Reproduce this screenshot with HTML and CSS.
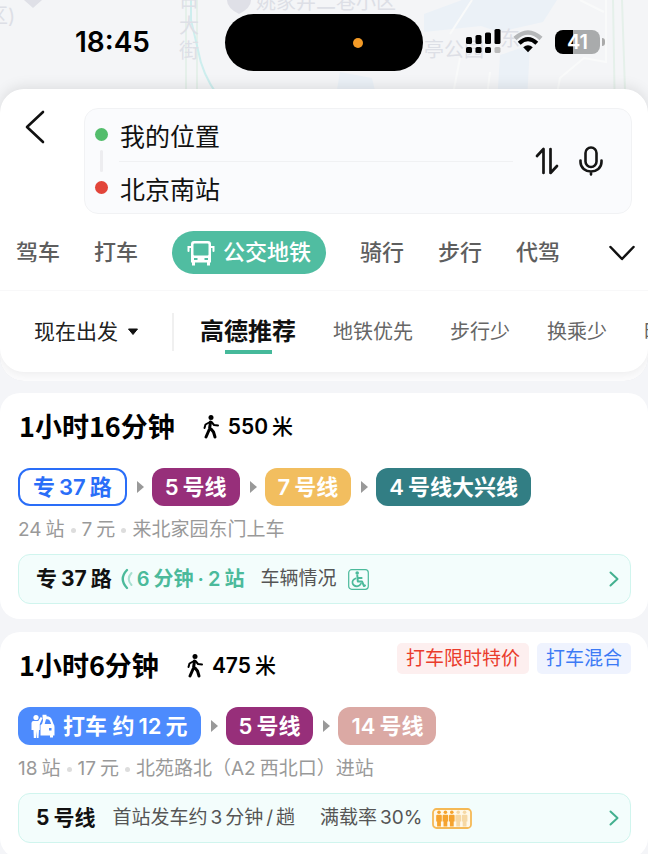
FILE: index.html
```html
<!DOCTYPE html>
<html lang="zh-CN">
	<head>
		<meta charset="utf-8">
		<meta name="viewport" content="width=device-width, initial-scale=1">
		<title>公交地铁路线</title>
		<link rel="stylesheet" href="styles.css">
	</head>
	<body>
		<header class="status-bar">
			<svg class="map" viewBox="0 0 648 120" preserveAspectRatio="xMidYMin slice" aria-hidden="true">
				<rect width="648" height="120" fill="#f4f5f7"/>
				<path d="M462 0h95l-14 22-44 10-18-6-57 6V14zM500 55l30-10-4 75h-30zM340 72l32 6 10 42h-50z" fill="#ebf1f7"/>
				<path d="M472 0l-22 34M460 58l-12 62M490 72l-6 48M606 0v62l-22-4-24 20-8 42M580 0l24 12" fill="none" stroke="#f9fafa" stroke-width="2"/>
				<path d="M186 0v120M197 0v120M613 0l2 120M622 0l4 120" fill="none" stroke="#e5f0ea" stroke-width="2"/>
				<path d="M191 0v20l7 30q4 24 20 46" fill="none" stroke="#cdeeee" stroke-width="2"/>
				<path d="M24 0h18l-9 8z" fill="#dfe0e7"/>
				<path d="M227 0h24q0 8-12 14-12-6-12-14z" fill="#dfe0e7"/>
				<g class="map-label">
					<text x="-12" y="23">区)</text>
					<text x="179" y="7">白</text>
					<text x="179" y="33">大</text>
					<text x="179" y="58">街</text>
					<text x="256" y="9">姚家井二巷小区</text>
					<text x="424" y="57">亭公园</text>
					<text x="500" y="46">东</text>
				</g>
			</svg>
			<time class="clock">18:45</time>
			<div class="island"><span class="island-dot"></span></div>
			<div class="status-icons">
				<svg width="35" height="25" viewBox="0 0 35 25" aria-hidden="true">
					<g fill="#000">
						<rect x="0" y="8" width="6" height="7" rx="1.6"/>
						<rect x="9.5" y="6" width="6" height="9" rx="1.6"/>
						<rect x="19" y="3.5" width="6" height="11.5" rx="1.6"/>
						<rect x="28.5" y="0" width="6" height="15" rx="1.6"/>
						<rect x="0" y="18" width="6" height="6" rx="1.6"/>
						<rect x="9.5" y="18" width="6" height="6" rx="1.6"/>
						<rect x="19" y="18" width="6" height="6" rx="1.6"/>
					</g>
					<rect x="28.5" y="18" width="6" height="6" rx="1.6" fill="#bbb"/>
				</svg>
				<svg width="30" height="23" viewBox="0 0 30 23" aria-hidden="true">
					<path d="M2 8.5Q15-3.5 28 8.5" fill="none" stroke="#b5b7b9" stroke-width="4.5"/>
					<path d="M6.200 13.200Q15 5 23.800 13.200" fill="none" stroke="#000" stroke-width="4.200"/>
					<path d="M10.200 17.300Q15 13 19.800 17.300L15 22.300z" fill="#000"/>
				</svg>
				<div class="battery"><span class="battery-level">41</span></div>
			</div>
		</header>

		<div class="panel-wrap">
			<section class="panel">
				<form class="search">
					<button class="icon-btn back" type="button" aria-label="返回">
						<svg width="20" height="34" viewBox="0 0 20 34"><path d="M18 2L2 17l16 15" fill="none" stroke="#111" stroke-width="2.6" stroke-linecap="round" stroke-linejoin="round"/></svg>
					</button>
					<div class="places">
						<div class="place-fields">
							<div class="place">
								<label class="dot dot-start" for="from" aria-label="起点"></label>
								<input id="from" type="text" value="我的位置">
							</div>
							<div class="place-line"><span class="link-line"></span><span class="split-line"></span></div>
							<div class="place">
								<label class="dot dot-end" for="to" aria-label="终点"></label>
								<input id="to" type="text" value="北京南站">
							</div>
						</div>
						<button class="icon-btn" type="button" aria-label="交换起终点">
							<svg width="24" height="28" viewBox="0 0 24 28"><path d="M2 9l6.500-7V26M15.500 2v24l6.500-7" fill="none" stroke="#151515" stroke-width="2.7" stroke-linecap="round" stroke-linejoin="round"/></svg>
						</button>
						<button class="icon-btn" type="button" aria-label="语音输入">
							<svg width="24" height="30" viewBox="0 0 24 30"><g fill="none" stroke="#151515" stroke-width="2.6" stroke-linecap="round"><rect x="6.5" y="1.5" width="11" height="19.5" rx="5.5"/><path d="M1.500 14.500v1.500c0 6 5 9.500 10.500 9.500S22.500 22 22.500 16v-1.500M12 25.500v3"/></g></svg>
						</button>
					</div>
				</form>

				<nav class="modes">
					<a href="#">驾车</a>
					<a href="#">打车</a>
					<a href="#" class="mode-on">
						<svg width="28" height="26" viewBox="0 0 28 26" aria-hidden="true">
							<path fill="#fff" fill-rule="evenodd" d="M7 1h14q3 0 3 3v18.500H4V4q0-3 3-3zm.500 2.600q-1 0-1 1v10q0 1 1 1h13q1 0 1-1v-10q0-1-1-1zM7 18v2h3.500v-2zm10.500 0v2H21v-2z"/>
							<path fill="#fff" d="M5 22h3v3.500H5zM20 22h3v3.500h-3z"/>
							<path d="M4 7H1.500v4M24 7h2.500v4" fill="none" stroke="#fff" stroke-width="2" stroke-linecap="round"/>
						</svg>
						公交地铁
					</a>
					<a href="#">骑行</a>
					<a href="#">步行</a>
					<a href="#">代驾</a>
					<button class="icon-btn more" type="button" aria-label="更多">
						<svg width="26" height="16" viewBox="0 0 26 16"><path d="M1.500 2L13 14 24.500 2" fill="none" stroke="#111" stroke-width="2.5" stroke-linecap="round" stroke-linejoin="round"/></svg>
					</button>
				</nav>

				<div class="filters">
					<button class="depart" type="button">现在出发
						<svg width="12" height="8" viewBox="0 0 12 8" aria-hidden="true"><path d="M1.500 1h9L6 6.500z" fill="#111" stroke="#111" stroke-linejoin="round"/></svg>
					</button>
					<a href="#" class="filter-on">高德推荐</a>
					<a href="#">地铁优先</a>
					<a href="#">步行少</a>
					<a href="#">换乘少</a>
					<a href="#">时间短</a>
				</div>
			</section>
		</div>

		<main class="routes">
			<article class="route">
				<div class="route-head">
					<h2>1小时16分钟</h2>
					<p class="walk">
						<svg width="16" height="24" viewBox="0 0 16 24" aria-hidden="true"><circle cx="8" cy="2.6" r="2.5"/><path d="M7.500 7L6.500 14 3 22M8 14l2.500 3 1.500 5" class="limb-thick"/><path d="M7 7L2.500 9.500 1.500 13M8.500 7l2.500 3 4 .500" class="limb"/></svg>
						<span><span class="num num-first">550</span>米</span>
					</p>
				</div>
				<div class="legs">
					<span class="leg leg-bus">专<span class="num">37</span>路</span>
					<span class="leg line-5"><span class="num num-first">5</span>号线</span>
					<span class="leg line-7"><span class="num num-first">7</span>号线</span>
					<span class="leg line-4"><span class="num num-first">4</span>号线大兴线</span>
				</div>
				<p class="meta"><span><span class="num num-first">24</span>站</span><span><span class="num num-first">7</span>元</span><span>来北家园东门上车</span></p>
				<a href="#" class="live">
					<strong>专<span class="num">37</span>路</strong>
					<span class="arrive">
						<svg width="12" height="22" viewBox="0 0 12 22" aria-hidden="true"><path d="M6 2Q-2.500 11 6 20" fill="none" stroke="#4bba9b" stroke-width="2.3" stroke-linecap="round"/><path d="M10.500 5Q5 11 10.500 17" fill="none" stroke="#a6dfd0" stroke-width="2" stroke-linecap="round"/></svg>
						<span><span class="num num-first">6</span>分钟<span class="num">·</span><span class="num num-first">2</span>站</span>
					</span>
					<span class="live-text">车辆情况</span>
					<svg width="21" height="21" viewBox="0 0 21 21" aria-hidden="true">
						<g fill="none" stroke="#4bba9b" stroke-linecap="round" stroke-linejoin="round">
							<rect x=".7" y=".7" width="19.6" height="19.6" rx="3" stroke-width="1.2"/>
							<path d="M9.300 6.500l.500 6H14l2 4.500 1-.500M9.600 9h4" stroke-width="2"/>
							<path d="M7.500 9.500Q4 11 4.500 14T9 17.300Q12 17 13 14.500" stroke-width="1.700"/>
						</g>
						<circle cx="9.2" cy="4" r="1.8" fill="#4bba9b"/>
					</svg>
					<svg class="go" width="10" height="16" viewBox="0 0 10 16" aria-hidden="true"><path d="M1.500 1.500L8.500 8l-7 6.500"/></svg>
				</a>
			</article>

			<article class="route">
				<div class="route-head">
					<h2>1小时6分钟</h2>
					<p class="walk">
						<svg width="16" height="24" viewBox="0 0 16 24" aria-hidden="true"><circle cx="8" cy="2.6" r="2.5"/><path d="M7.500 7L6.500 14 3 22M8 14l2.500 3 1.500 5" class="limb-thick"/><path d="M7 7L2.500 9.500 1.500 13M8.500 7l2.500 3 4 .500" class="limb"/></svg>
						<span><span class="num num-first">475</span>米</span>
					</p>
					<div class="tags">
						<span class="tag tag-red">打车限时特价</span>
						<span class="tag tag-blue">打车混合</span>
					</div>
				</div>
				<div class="legs">
					<span class="leg leg-taxi">
						<svg width="24" height="25" viewBox="0 0 24 25" aria-hidden="true">
							<g fill="#fff">
								<circle cx="5" cy="3.5" r="2.6"/>
								<path d="M2.500 7h4.700l2.500-4 1.800 1-2.700 6v6H8l-.500 8H5.800L5.500 17 5 24H2.800L2.500 16H.500V9q0-2 2-2z"/>
								<path fill-rule="evenodd" d="M11.500 2.500V.800h4v1.400q4.500.300 5.500 3.800l1.500 4q1 1 1 3v8.500h-1.500v2h-3v-2h-9.500V11l1.500-1 1-3.500zm3.500 2.700L13.700 10h6.500l-1.200-3q-.700-1.800-2.500-1.800zM18 14v2.500h2.500V14z"/>
							</g>
						</svg>
						<span>打车 约<span class="num">12</span>元</span>
					</span>
					<span class="leg line-5"><span class="num num-first">5</span>号线</span>
					<span class="leg line-14"><span class="num num-first">14</span>号线</span>
				</div>
				<p class="meta"><span><span class="num num-first">18</span>站</span><span><span class="num num-first">17</span>元</span><span>北苑路北（<span class="num num-first">A2</span>西北口）进站</span></p>
				<a href="#" class="live live-wide">
					<strong><span class="num num-first">5</span>号线</strong>
					<span class="live-text">首站发车约<span class="num">3</span>分钟<span class="num">/</span>趟</span>
					<span class="live-text load"><span>满载率<span class="num">30%</span></span>
						<svg width="40" height="21" viewBox="0 0 40 21" aria-hidden="true">
							<defs><g id="person"><circle cx="2.8" cy="1.8" r="1.8"/><path d="M1 4.200h3.600q1 0 1 1V11H4.700v5H.900v-5H0V5.200q0-1 1-1z"/></g></defs>
							<rect x="1" y="1" width="38" height="19" rx="3.5" fill="#fff8e8" stroke="#f5b956" stroke-width="1.8"/>
							<g fill="#f5a32e"><use href="#person" x="4.2" y="2.5"/><use href="#person" x="10.6" y="2.5"/><use href="#person" x="17" y="2.5"/></g>
							<g fill="#f6d8a4"><use href="#person" x="23.4" y="2.5"/><use href="#person" x="29.8" y="2.5"/></g>
						</svg>
					</span>
					<svg class="go" width="10" height="16" viewBox="0 0 10 16" aria-hidden="true"><path d="M1.500 1.500L8.500 8l-7 6.500"/></svg>
				</a>
			</article>
		</main>
	</body>
</html>
```

FILE: styles.css
```css
* {
	box-sizing: border-box;
}

body {
	margin: 0;
	height: 100vh;
	overflow: hidden;
	display: flex;
	flex-direction: column;
	background: #f4f5f8;
	color: #111;
	font-family: Inter, "Noto Sans CJK SC", sans-serif;
	font-size: 19px;
}

h2,
p {
	margin: 0;
}

a {
	color: inherit;
	text-decoration: none;
}

svg {
	flex: none;
	display: block;
}

button,
input {
	border: 0;
	padding: 0;
	background: none;
	color: inherit;
	font-family: inherit;
}

/* status bar */
.status-bar {
	position: relative;
	flex: none;
	height: 89px;
	padding-top: 14px;
	display: grid;
	grid-template-columns: 1fr 198px 1fr;
	align-items: start;
}

.map {
	position: absolute;
	top: 0;
	left: 0;
	width: 100%;
	height: 120px;
	z-index: -1;
}

.map-label {
	fill: #dddfe6;
	font-size: 20px;
}

.clock {
	line-height: 57px;
	text-align: center;
	font-size: 28px;
	font-weight: 600;
	color: #000;
}

.island {
	height: 57px;
	border-radius: 29px;
	background: #000;
	display: flex;
	align-items: center;
	justify-content: flex-end;
	padding-right: 60px;
}

.island-dot {
	width: 10px;
	height: 10px;
	border-radius: 50%;
	background: #f39a26;
}

.status-icons {
	height: 55px;
	display: flex;
	align-items: center;
	justify-content: center;
	gap: 12px;
}

.battery {
	display: flex;
	align-items: center;
	gap: 2px;
}

.battery::after {
	content: "";
	width: 3px;
	height: 8px;
	border-radius: 0 3px 3px 0;
	background: #aaa;
}

.battery-level {
	width: 45px;
	border-radius: 8px;
	background: linear-gradient(90deg, #000 41%, #a9abac 41%);
	color: #fff;
	font-size: 20px;
	font-weight: 600;
	line-height: 24px;
	text-align: center;
}

/* search panel */
.panel-wrap {
	flex: none;
	padding-bottom: 9px;
	border-radius: 24px;
	background: #fbfbfc;
	overflow: hidden;
	box-shadow: 0 -2px 14px rgba(0, 0, 0, 0.1);
	clip-path: inset(-20px 0 0 0 round 0 0 24px 24px);
}

.panel {
	border-radius: 24px;
	background: #fff;
	box-shadow: 0 2px 8px rgba(0, 0, 0, 0.06);
}

.search {
	display: flex;
	align-items: flex-start;
	padding: 19px 16px 17px 25px;
	gap: 39px;
}

.icon-btn {
	flex: none;
	display: flex;
}

.back {
	margin-top: 2px;
}

.places {
	flex: 1;
	display: flex;
	align-items: center;
	gap: 20px;
	padding: 0 28px 0 10px;
	border: 1px solid #f1f2f4;
	border-radius: 14px;
	background: #fafbfd;
}

.place-fields {
	flex: 1;
	margin-right: 2px;
}

.place {
	display: flex;
	align-items: center;
	gap: 12px;
}

.place input {
	flex: 1;
	min-width: 0;
	height: 51px;
	font-size: 25px;
}

.dot {
	flex: none;
	width: 13px;
	height: 13px;
	border-radius: 50%;
}

.dot-start {
	background: #53bd6c;
}

.dot-end {
	background: #e2453a;
}

.place-line {
	display: flex;
	align-items: center;
	height: 2px;
	padding-left: 5px;
	gap: 16px;
}

.link-line {
	flex: none;
	width: 3px;
	height: 22px;
	border-radius: 2px;
	background: #ededf0;
}

.split-line {
	flex: 1;
	height: 1px;
	background: #f0f1f3;
}

.modes {
	display: flex;
	align-items: center;
	gap: 34px;
	padding: 0 13px 16px 16px;
	border-bottom: 1px solid #f8f8f9;
	color: #5e5e5e;
	font-size: 22px;
	font-weight: 500;
	line-height: 43px;
	white-space: nowrap;
}

.mode-on {
	display: flex;
	align-items: center;
	gap: 8px;
	padding: 0 15px;
	border-radius: 22px;
	background: #50bda1;
	color: #fff;
}

.more {
	margin-left: auto;
}

.filters {
	display: flex;
	align-items: center;
	gap: 37px;
	height: 81px;
	padding-left: 34px;
	overflow: hidden;
	color: #666;
	font-size: 20px;
	line-height: 38px;
	white-space: nowrap;
}

.filters > * {
	flex: none;
}

.depart {
	display: flex;
	align-items: center;
	gap: 9px;
	height: 38px;
	margin-right: -11px;
	padding-right: 33px;
	border-right: 2px solid #f0f0f0;
	color: #222;
	font-size: 21px;
	line-height: 36px;
}

.filter-on {
	color: #111;
	font-size: 24px;
	font-weight: 700;
	background: linear-gradient(#45b99a, #45b99a) center bottom / 47px 4px no-repeat;
	padding: 3px 0;
}

/* route cards */
.routes {
	flex: 1;
	min-height: 0;
	overflow: hidden;
	padding-top: 12px;
}

.route {
	margin-bottom: 13px;
	padding: 11px 17px 15px 18px;
	border-radius: 20px;
	background: #fff;
}

.route-head {
	display: flex;
	height: 48px;
	align-items: flex-start;
	gap: 28px;
	padding-left: 1px;
}

.route-head h2 {
	font-family: "Noto Sans CJK SC", sans-serif;
	font-size: 27px;
	font-weight: 700;
	line-height: 44px;
	color: #000;
}

.walk {
	display: flex;
	align-items: center;
	gap: 9px;
	font-size: 21px;
	font-weight: 500;
	line-height: 46px;
	color: #000;
}

.limb,
.limb-thick {
	fill: none;
	stroke: #000;
	stroke-width: 2;
	stroke-linecap: round;
	stroke-linejoin: round;
}

.limb-thick {
	stroke-width: 3;
}

/* latin digits set between chinese characters */
.num {
	margin: 0 4px;
}

.num-first {
	margin-left: 0;
}

.walk .num {
	font-weight: 600;
}

.tags {
	display: flex;
	gap: 8px;
	margin-left: auto;
}

.tag {
	padding: 0 9px;
	border-radius: 5px;
	line-height: 31px;
}

.tag-red {
	background: #fdefef;
	color: #ea3c2c;
}

.tag-blue {
	background: #eff3fe;
	color: #3c7af5;
}

.legs {
	display: flex;
	margin-top: 16px;
}

.leg {
	height: 38px;
	padding: 0 13px;
	border-radius: 12px;
	color: #fff;
	font-size: 22px;
	font-weight: 600;
	line-height: 38px;
	white-space: nowrap;
}

.leg + .leg {
	position: relative;
	margin-left: 25px;
}

.leg + .leg::before {
	content: "";
	position: absolute;
	left: -15px;
	top: 13px;
	border-left: 7px solid #999;
	border-top: 6px solid transparent;
	border-bottom: 6px solid transparent;
}

.leg-bus {
	border: 2px solid #2a6ef8;
	color: #2a6ef8;
	line-height: 34px;
}

.leg-taxi {
	display: flex;
	align-items: center;
	gap: 8px;
	background: #4d8bfd;
}

.line-5 {
	background: #972f7a;
}

.line-7 {
	background: #f2be5f;
}

.line-4 {
	background: #327e84;
}

.line-14 {
	background: #dba9a4;
}

.meta {
	display: flex;
	margin-top: 10px;
	line-height: 28px;
	color: #999;
}

.meta > span + span::before {
	content: "";
	display: inline-block;
	width: 5px;
	height: 5px;
	margin: 0 6px;
	border-radius: 50%;
	background: #ddd;
	vertical-align: middle;
}

.live {
	display: flex;
	align-items: center;
	height: 50px;
	margin-top: 10px;
	padding: 0 11px 0 17px;
	border: 1px solid #d0f5ee;
	border-radius: 12px;
	background: #f3fdfc;
	line-height: 46px;
	white-space: nowrap;
}

.live strong {
	font-size: 21px;
	font-weight: 700;
}

.arrive {
	display: flex;
	align-items: center;
	gap: 4px;
	margin: 0 16px 0 9px;
	color: #4bba9b;
	font-size: 20px;
	font-weight: 600;
}

.live-text {
	margin-right: 12px;
	color: #555;
}

.live-text .num {
	margin: 0 3px;
}

.live-wide {
	gap: 17px;
}

.live-wide .live-text {
	margin-right: 8px;
}

.load {
	display: flex;
	align-items: center;
	gap: 6px;
}

.go {
	margin-left: auto;
	fill: none;
	stroke: #43b08f;
	stroke-width: 2;
	stroke-linecap: round;
	stroke-linejoin: round;
}
```
